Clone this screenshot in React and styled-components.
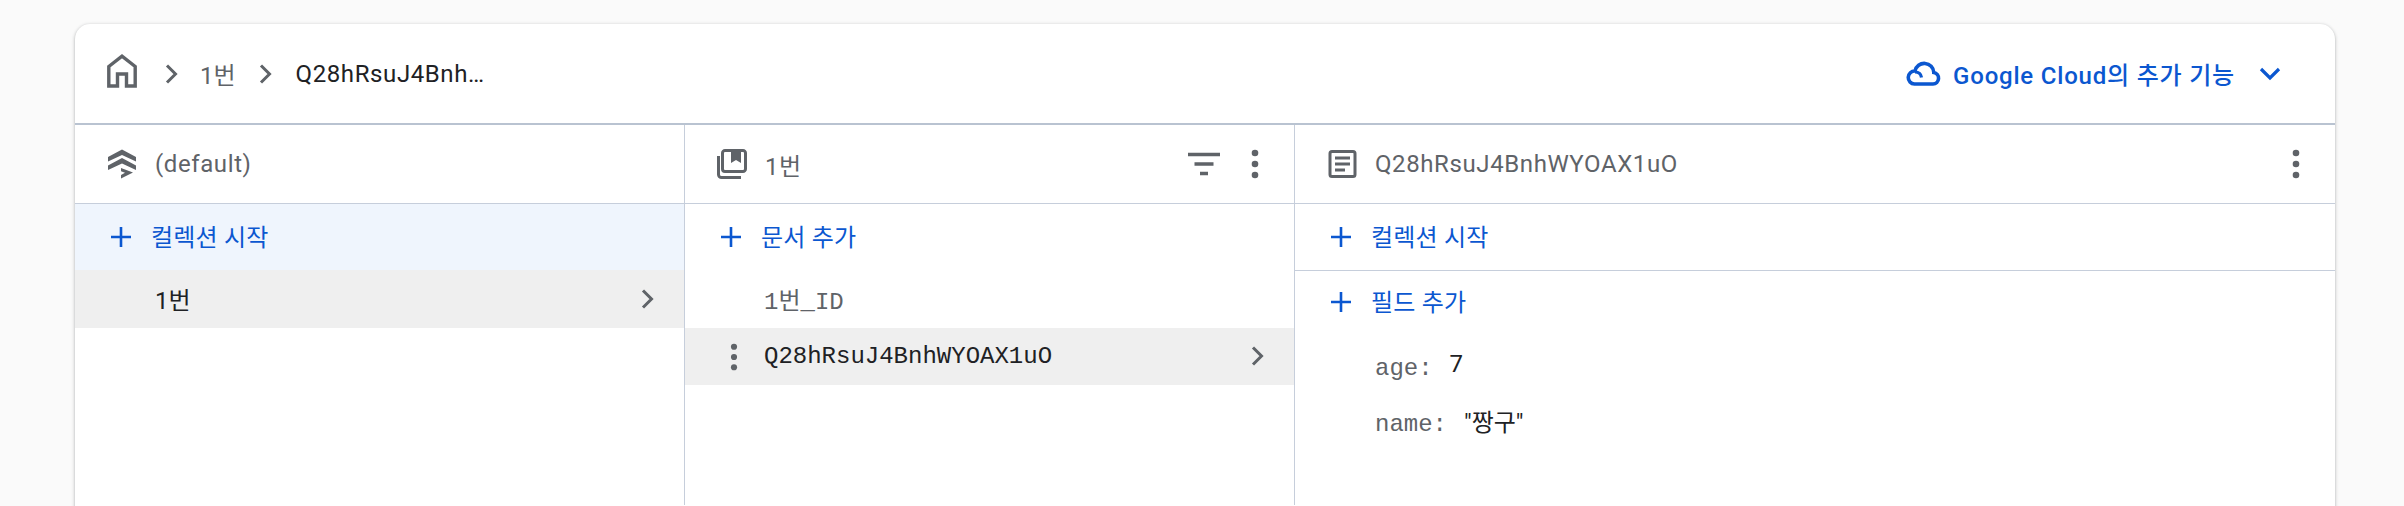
import React from "react";
import styled, { createGlobalStyle } from "styled-components";

const BLUE = "#0b57d0";
const GREY = "#5f6368";
const LINE = "#c6cedb";
const UI_FONT = `Roboto, "Noto Sans CJK KR", sans-serif`;
const MONO_FONT = `"Liberation Mono", "Noto Sans CJK KR", monospace`;

const GlobalStyle = createGlobalStyle`
  html, body {
    margin: 0;
    height: 506px;
    overflow: hidden;
    background: #fafafa;
    font-family: ${UI_FONT};
  }
`;

const Page = styled.div`
  box-sizing: border-box;
  height: 506px;
  padding: 24px 69px 0 75px;
  overflow: hidden;
`;

const Card = styled.div`
  height: 520px;
  background: #fff;
  border-radius: 15px 15px 0 0;
  box-shadow: 0 1px 3px rgba(60, 64, 67, 0.3), 0 1px 4px rgba(60, 64, 67, 0.15);
`;

const TopBar = styled.header`
  box-sizing: border-box;
  height: 101px;
  display: flex;
  align-items: center;
  justify-content: space-between;
  padding: 0 54px 0 32px;
  border-bottom: 2px solid #b9c3d1;
`;

const Crumbs = styled.nav`
  display: flex;
  align-items: center;
`;

const HomeIcon = styled.svg`
  width: 30px;
  height: 34px;
  margin-right: 28px;
  margin-top: -6px;
`;

const CrumbArrow = styled.svg`
  width: 13px;
  height: 20px;
`;

const Crumb = styled.span`
  font-size: 24px;
  letter-spacing: ${(p) => (p.$current ? "0.6px" : "0")};
  color: ${(p) => (p.$current ? "#202124" : GREY)};
  margin: 0 23px 0 ${(p) => (p.$current ? 24 : 22)}px;
`;

const CloudLink = styled.a`
  display: flex;
  align-items: center;
  color: ${BLUE};
  font-size: 24px;
  font-weight: 500;
  letter-spacing: 0.8px;
`;

const CloudIcon = styled.svg`
  width: 35px;
  height: 25px;
  margin-right: 12px;
`;

const ExpandIcon = styled.svg`
  width: 22px;
  height: 14px;
  margin-left: 24px;
`;

const Columns = styled.div`
  display: grid;
  grid-template-columns: 610px 610px 1fr;
  height: 380px;
`;

const Column = styled.section`
  box-sizing: border-box;
  border-right: ${(p) => (p.$last ? "none" : `1px solid ${LINE}`)};
`;

const ColumnHead = styled.div`
  box-sizing: border-box;
  height: 79px;
  display: flex;
  align-items: center;
  padding: 0 33px 0 32px;
  border-bottom: 1px solid ${LINE};
  color: ${GREY};
  font-size: 24px;
  letter-spacing: 0.6px;
`;

const HeadIcon = styled.svg`
  width: 30px;
  height: 30px;
  flex: none;
  margin-right: 18px;
`;

const HeadTitle = styled.span`
  flex: 1;
`;

const HeadAction = styled.svg`
  width: ${(p) => p.$w || 12}px;
  height: 30px;
  flex: none;
  margin-left: ${(p) => p.$gap || 0}px;
`;

const AddRow = styled.div`
  box-sizing: border-box;
  height: ${(p) => p.$h || 66}px;
  display: flex;
  align-items: center;
  padding-left: 36px;
  color: ${BLUE};
  font-size: 24px;
  letter-spacing: 0.2px;
  background: ${(p) => (p.$active ? "#eff5fd" : "transparent")};
  border-bottom: ${(p) => (p.$divided ? `1px solid ${LINE}` : "none")};
`;

const AddLabel = styled.span`
  margin-top: -3px;
`;

const PlusIcon = styled.svg`
  width: 20px;
  height: 20px;
  margin-right: 20px;
`;

const ListRow = styled.div`
  box-sizing: border-box;
  height: 57.5px;
  display: flex;
  align-items: center;
  padding-left: ${(p) => (p.$mono ? 79 : 80)}px;
  position: relative;
  background: ${(p) => (p.$selected ? "#efefef" : "transparent")};
  color: ${(p) => (p.$muted ? GREY : "#202124")};
  font-size: 24px;
  font-family: ${(p) => (p.$mono ? MONO_FONT : UI_FONT)};
`;

const RowTitle = styled.span`
  flex: 1;
`;

const RowDots = styled.svg`
  position: absolute;
  left: 43px;
  top: 15px;
  width: 12px;
  height: 28px;
`;

const RowArrow = styled.svg`
  width: 13px;
  height: 20px;
  margin-right: 30px;
`;

const FieldList = styled.div`
  display: grid;
  padding: 7px 0 0 80px;
`;

const Field = styled.div`
  height: 56px;
  display: flex;
  align-items: center;
  font-size: 24px;
`;

const FieldKey = styled.span`
  font-family: ${MONO_FONT};
  color: ${GREY};
  margin-right: 17px;
`;

const FieldValue = styled.span`
  color: #202124;
  margin-top: -8px;
`;

const Arrow = () => <path d="M2 1.500l8.500 8.500-8.500 8.500" fill="none" stroke={GREY} strokeWidth="3" />;

const Dots = () => (
  <g fill={GREY}>
    <circle cx="6" cy="4" r="3.3" />
    <circle cx="6" cy="15" r="3.3" />
    <circle cx="6" cy="26" r="3.3" />
  </g>
);

const Plus = () => (
  <PlusIcon viewBox="0 0 20 20">
    <path d="M10 0v20M0 10h20" stroke={BLUE} strokeWidth="2.6" />
  </PlusIcon>
);

export default function App() {
  return (
    <Page>
      <GlobalStyle />
      <Card>
        <TopBar>
          <Crumbs>
            <HomeIcon viewBox="0 0 30 34">
              <path
                d="M1.800 32V12.500L15 2.200 28.200 12.500V32h-8.700V20h-9v12z"
                fill="none"
                stroke={GREY}
                strokeWidth="3.4"
              />
            </HomeIcon>
            <CrumbArrow viewBox="0 0 13 20">
              <Arrow />
            </CrumbArrow>
            <Crumb>1번</Crumb>
            <CrumbArrow viewBox="0 0 13 20">
              <Arrow />
            </CrumbArrow>
            <Crumb $current>Q28hRsuJ4Bnh…</Crumb>
          </Crumbs>
          <CloudLink>
            <CloudIcon viewBox="0 0 35 25">
              <path
                d="M8.500 23H27a5.800 5.800 0 0 0 .8-11.500A9.500 9.500 0 0 0 9 10 6.500 6.500 0 0 0 8.500 23z"
                fill="none"
                stroke={BLUE}
                strokeWidth="3.6"
              />
              <path d="M9 11c3.500 0 6 2 6.500 5.500" fill="none" stroke={BLUE} strokeWidth="3.2" />
            </CloudIcon>
            Google Cloud의 추가 기능
            <ExpandIcon viewBox="0 0 22 14">
              <path d="M2 2l9 9 9-9" fill="none" stroke={BLUE} strokeWidth="3.2" />
            </ExpandIcon>
          </CloudLink>
        </TopBar>
        <Columns>
          <Column>
            <ColumnHead>
              <HeadIcon viewBox="0 0 30 30">
                <g fill={GREY}>
                  <path d="M15 .5L29 8v4.500L15 6 1 12.500V8z" />
                  <path d="M15 9l14 7.500V21l-14-6.500L1 21v-4.500z" />
                  <path d="M14 19l12 4.500L14 29.500V26l4-2.300-4-1.500z" />
                </g>
              </HeadIcon>
              <HeadTitle>(default)</HeadTitle>
            </ColumnHead>
            <AddRow $active>
              <Plus />
              <AddLabel>컬렉션 시작</AddLabel>
            </AddRow>
            <ListRow $selected>
              <RowTitle>1번</RowTitle>
              <RowArrow viewBox="0 0 13 20">
                <Arrow />
              </RowArrow>
            </ListRow>
          </Column>
          <Column>
            <ColumnHead>
              <HeadIcon viewBox="0 0 30 30">
                <path
                  d="M8 1.500h18a2.500 2.500 0 0 1 2.500 2.500v16a2.500 2.500 0 0 1-2.500 2.500H8A2.500 2.500 0 0 1 5.500 20V4A2.500 2.500 0 0 1 8 1.500z"
                  fill="none"
                  stroke={GREY}
                  strokeWidth="3"
                />
                <path d="M1.500 7v18.500a3 3 0 0 0 3 3H24" fill="none" stroke={GREY} strokeWidth="3" />
                <path d="M14 2h10v12l-5-3-5 3z" fill={GREY} />
              </HeadIcon>
              <HeadTitle>1번</HeadTitle>
              <HeadAction $w={32} viewBox="0 0 32 30">
                <path d="M0 5.500h32M6.500 15h19M12 24.500h8" stroke={GREY} strokeWidth="3.400" />
              </HeadAction>
              <HeadAction $gap={29} viewBox="0 0 12 30">
                <Dots />
              </HeadAction>
            </ColumnHead>
            <AddRow>
              <Plus />
              <AddLabel>문서 추가</AddLabel>
            </AddRow>
            <ListRow $mono $muted>
              <RowTitle>1번_ID</RowTitle>
            </ListRow>
            <ListRow $mono $selected>
              <RowDots viewBox="0 0 12 30">
                <Dots />
              </RowDots>
              <RowTitle>Q28hRsuJ4BnhWYOAX1uO</RowTitle>
              <RowArrow viewBox="0 0 13 20">
                <Arrow />
              </RowArrow>
            </ListRow>
          </Column>
          <Column $last>
            <ColumnHead>
              <HeadIcon viewBox="0 0 30 30">
                <rect x="3" y="2.500" width="25" height="25" rx="2" fill="none" stroke={GREY} strokeWidth="3" />
                <path d="M8 9h15M8 15h15M8 21h10" stroke={GREY} strokeWidth="3" />
              </HeadIcon>
              <HeadTitle>Q28hRsuJ4BnhWYOAX1uO</HeadTitle>
              <HeadAction viewBox="0 0 12 30">
                <Dots />
              </HeadAction>
            </ColumnHead>
            <AddRow $divided $h={67}>
              <Plus />
              <AddLabel>컬렉션 시작</AddLabel>
            </AddRow>
            <AddRow $h={62}>
              <Plus />
              <AddLabel>필드 추가</AddLabel>
            </AddRow>
            <FieldList>
              <Field>
                <FieldKey>age:</FieldKey>
                <FieldValue>7</FieldValue>
              </Field>
              <Field>
                <FieldKey>name:</FieldKey>
                <FieldValue>"짱구"</FieldValue>
              </Field>
            </FieldList>
          </Column>
        </Columns>
      </Card>
    </Page>
  );
}
